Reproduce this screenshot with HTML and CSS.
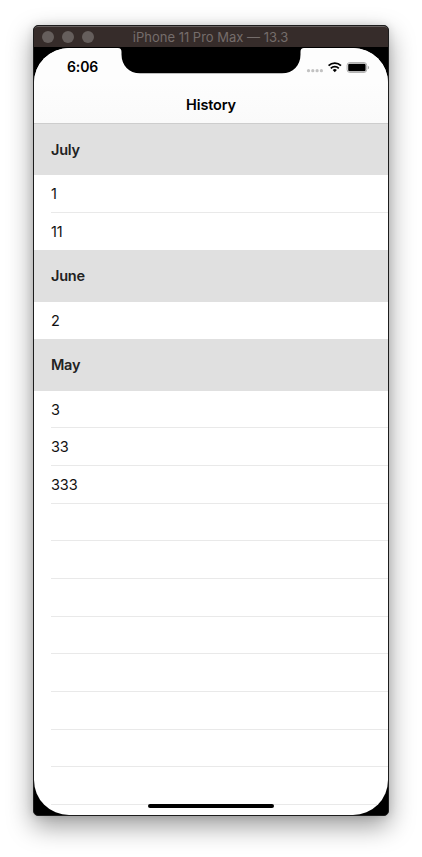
FILE: index.html
```html
<!DOCTYPE html>
<html lang="en">
<head>
<meta charset="utf-8">
<title>History</title>
<link rel="stylesheet" href="styles.css">
</head>
<body>
<div class="window">
  <div class="titlebar">
    <div class="lights"><i></i><i></i><i></i></div>
    <span class="window-title">iPhone 11 Pro Max — 13.3</span>
  </div>
  <div class="device">
    <div class="screen">
      <header class="nav">
        <div class="status">
          <span class="time">6:06</span>
          <svg class="status-icons" width="64" height="14" viewBox="0 0 64 14">
            <g fill="#c2c2c2"><circle cx="2.5" cy="8.7" r="1.6"/><circle cx="6.8" cy="8.7" r="1.6"/><circle cx="11.1" cy="8.7" r="1.6"/><circle cx="15.4" cy="8.7" r="1.6"/></g>
            <g fill="none" stroke="#000" stroke-width="1.8">
              <path d="M22.6 3.6a9 9 0 0 1 12.4 0"/>
              <path d="M24.8 6.3a5.8 5.8 0 0 1 8 0"/>
            </g>
            <path d="M26.7 8.1a3 3 0 0 1 4.2 0L28.8 10.2z"/>
            <rect x="41.1" y=".6" width="19.6" height="9.8" rx="2.7" fill="#fff" stroke="#aaa"/>
            <rect x="42.2" y="1.7" width="17.4" height="7.6" rx="1.4"/>
            <path d="M61.8 3.7c1.8.5 1.8 3.1 0 3.6z" fill="#aaa"/>
          </svg>
        </div>
        <h1>History</h1>
      </header>
      <h2>July</h2>
      <ul>
        <li><span>1</span></li>
        <li><span>11</span></li>
      </ul>
      <h2>June</h2>
      <ul>
        <li><span>2</span></li>
      </ul>
      <h2>May</h2>
      <ul class="filled">
        <li><span>3</span></li>
        <li><span>33</span></li>
        <li><span>333</span></li>
        <li><span></span></li>
        <li><span></span></li>
        <li><span></span></li>
        <li><span></span></li>
        <li><span></span></li>
        <li><span></span></li>
        <li><span></span></li>
        <li><span></span></li>
      </ul>
      <div class="home"></div>
    </div>
    <svg class="notch" width="188" height="27" viewBox="0 0 188 27">
      <path d="M0 0H188V1H187C184.5 1 183.5 2.4 183.5 5V7.5C183.5 18.5 176 26.3 165 26.3H23C12 26.3 4.5 18.5 4.5 7.5V5C4.5 2.4 3.5 1 1 1H0z"/>
    </svg>
  </div>
</div>
</body>
</html>
```
FILE: styles.css
```css
* { box-sizing: border-box; }
body {
  margin: 0;
  height: 857px;
  padding: 25px 33px;
  background: #fff;
  font-family: Inter, "Liberation Sans", sans-serif;
  color: #111;
  overflow: hidden;
}
.window {
  width: 356px;
  height: 791px;
  border: 1px solid #1d1d1d;
  border-radius: 5px;
  background: #000;
  overflow: hidden;
  box-shadow: 0 10px 26px rgba(0, 0, 0, .4), 0 0 8px rgba(0, 0, 0, .12);
}
.titlebar {
  position: relative;
  height: 21px;
  display: flex;
  align-items: center;
  justify-content: center;
  background: #362c2a;
  border-top: 1px solid #686160;
  border-radius: 4px 4px 0 0;
}
.lights {
  position: absolute;
  left: 8px;
  top: 4px;
  display: flex;
  gap: 8px;
}
.lights i {
  width: 12px;
  height: 12px;
  border-radius: 50%;
  background: #655e5c;
}
.window-title {
  font-size: 13px;
  line-height: 20px;
  color: #756d6b;
  white-space: nowrap;
  padding-right: 1px;
}
.device {
  position: relative;
  height: 768px;
  padding-top: 1px;
}
.screen {
  position: relative;
  height: 767px;
  background: #fff;
  border-radius: 35px;
  overflow: hidden;
}
.nav {
  height: 75.75px;
  background: linear-gradient(#fdfdfd 45%, #fafafa);
  border-bottom: 1px solid #cdcdcd;
}
.status {
  display: flex;
  justify-content: space-between;
  height: 38px;
  padding: 11px 18px 0 33px;
}
.time {
  font-size: 14px;
  font-weight: 600;
  line-height: 16px;
  color: #000;
  letter-spacing: -.1px;
}
.status-icons { margin-top: 3px; }
h1, h2 {
  margin: 0;
  font-size: 14.5px;
  font-weight: 600;
}
h1 {
  text-align: center;
  line-height: 37px;
  color: #000;
  letter-spacing: -.15px;
}
h2 {
  height: 51.25px;
  padding-left: 17px;
  line-height: 52px;
  background: #e0e0e0;
  color: #222;
  letter-spacing: -.25px;
}
ul {
  margin: 0;
  padding: 0 0 0 17px;
  list-style: none;
}
li {
  height: 37.68px;
  border-bottom: 1px solid #e9e9e9;
  font-size: 14.5px;
  line-height: 38px;
  letter-spacing: -.1px;
}
ul:not(.filled) li:last-child { border-bottom: 0; }
.notch {
  position: absolute;
  left: 83px;
  top: 0;
}
.home {
  position: absolute;
  left: 114px;
  bottom: 7px;
  width: 126px;
  height: 4px;
  border-radius: 2px;
  background: #000;
}
```
